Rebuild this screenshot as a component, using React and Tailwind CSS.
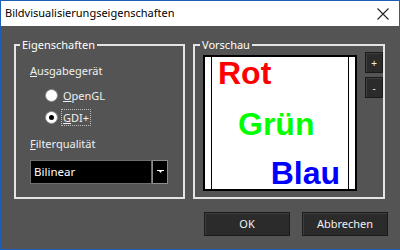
import React from 'react';

const Radio = ({ checked, label, focused }) => (
    <div className="flex items-center gap-[3px] h-[18px]">
        <div className="w-[13px] h-[13px] rounded-full bg-white border border-[#8a8a8a] flex items-center justify-center">
            {checked && <div className="w-[5px] h-[5px] rounded-full bg-black" />}
        </div>
        <span className={`px-[1px] leading-[15px] ${focused ? 'border border-dotted border-[#bdbdbd]' : 'border border-transparent'}`}>
            <span className="underline">{label[0]}</span>{label.slice(1)}
        </span>
    </div>
);

const DarkButton = ({ children, className = '' }) => (
    <button className={`bg-[#2b2b2b] border border-[#1a1a1a] shadow-[inset_1px_1px_0_#3e3e3e] text-[#f0f0f0] ${className}`}>
        {children}
    </button>
);

const App = () => {
    return (
        <div className="w-[400px] h-[250px] flex flex-col border border-[#1d5fb4] bg-[#545454] font-['Noto_Sans',sans-serif] text-[11px] text-[#f0f0f0] overflow-hidden">
            {/* titelleiste */}
            <div className="h-[25px] shrink-0 bg-white flex items-center justify-between pl-[4px] pr-[10px] text-black text-[11px]">
                <span>Bildvisualisierungseigenschaften</span>
                <svg width="12" height="12" viewBox="0 0 12 12" stroke="#222" strokeWidth="1.1">
                    <path d="M0.5 0.5L11.5 11.5M11.5 0.5L0.5 11.5" />
                </svg>
            </div>

            <div className="flex-1 flex flex-col pl-[13px] pr-[11px] pt-[11px]">
                <div className="flex gap-[8px]">
                    <fieldset className="w-[171px] h-[162px] border-2 border-[#e4e4e4]">
                        <legend className="px-[2px] ml-[4px] leading-[16px] text-white">Eigenschaften</legend>
                        <div className="px-[14px]">
                            <div className="mt-[10px] leading-[16px]">
                                <span className="underline">A</span>usgabegerät
                            </div>
                            <div className="pl-[15px] mt-[7px] flex flex-col gap-[4px]">
                                <Radio label="OpenGL" />
                                <Radio label="GDI+" checked focused />
                            </div>
                            <div className="mt-[10px] leading-[16px]">
                                <span className="underline">F</span>ilterqualität
                            </div>
                            <div className="mt-[8px] flex h-[24px] w-[138px]">
                                <div className="flex-1 bg-black border border-[#6e6e6e] flex items-center pl-[3px] text-white text-[11.5px]">
                                    Bilinear
                                </div>
                                <div className="w-[16px] bg-black border border-[#8c8c8c] flex items-center justify-center">
                                    <svg width="7" height="5" viewBox="0 0 7 5">
                                        <path d="M0 0H7V1H5L3.5 3L2 1H0Z" fill="#fff" />
                                    </svg>
                                </div>
                            </div>
                        </div>
                    </fieldset>

                    <fieldset className="w-[192px] h-[162px] border-2 border-[#e4e4e4]">
                        <legend className="px-[2px] ml-[5px] leading-[16px] text-white">Vorschau</legend>
                        <div className="flex gap-[8px] mt-[2px] pl-[8px]">
                            <div className="w-[154px] h-[136px] bg-white border-2 border-black px-[6px]">
                                <div className="h-full border-x border-black flex flex-col font-['Liberation_Sans',Arial,sans-serif] font-bold text-[32px] leading-[32px]">
                                    <span className="text-[#ff0000] pl-[6px]">Rot</span>
                                    <span className="text-[#00ff00] pl-[26px] mt-[19px]">Grün</span>
                                    <span className="text-[#0000ff] self-end pr-[8px] mt-[17px]">Blau</span>
                                </div>
                            </div>
                            <div className="flex flex-col gap-[4px] -mt-[3px]">
                                <DarkButton className="w-[18px] h-[21px] text-[10px] leading-none">+</DarkButton>
                                <DarkButton className="w-[18px] h-[21px] text-[10px] leading-none">-</DarkButton>
                            </div>
                        </div>
                    </fieldset>
                </div>

                <div className="flex justify-end gap-[12px] mt-[13px]">
                    <DarkButton className="w-[86px] h-[24px]">OK</DarkButton>
                    <DarkButton className="w-[86px] h-[24px]">Abbrechen</DarkButton>
                </div>
            </div>
        </div>
    );
};

export default App;
